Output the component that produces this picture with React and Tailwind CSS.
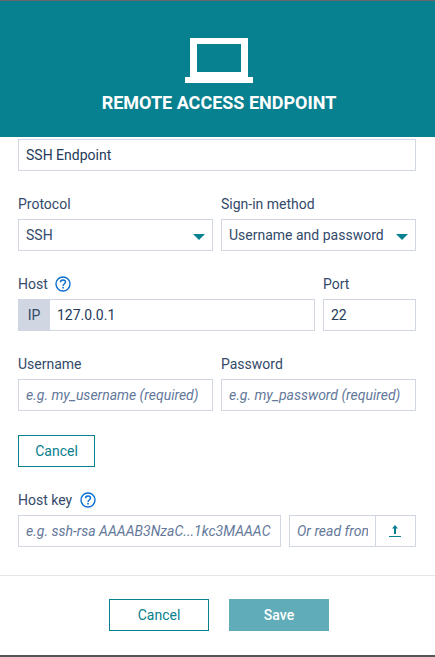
import { useState } from 'react'

const inputCls = "h-[32px] w-full min-w-0 border border-[#d0d7e2] bg-white px-[7px] text-[14px] text-[#253a58] outline-none placeholder:italic placeholder:text-[#64789a]"
const labelCls = "block h-[20px] text-[14px] leading-[20px] text-[#33496a]"

function Laptop() {
  return (
    <svg width="68" height="45" viewBox="0 0 68 45" fill="none">
      <path fill="#fff" fillRule="evenodd" d="M5 0h58v39h5v6H0v-6h5zM12 6v28h44V6z" />
    </svg>
  )
}

function HelpIcon() {
  return (
    <svg width="16" height="16" viewBox="0 0 16 16" fill="none">
      <circle cx="8" cy="8" r="7" stroke="#0a6ed1" strokeWidth="1.4" />
      <path d="M5.500 6.300c0-1.500 1.100-2.300 2.500-2.300s2.500.8 2.500 2.100c0 1.900-2.500 1.800-2.500 3.800" stroke="#0a6ed1" strokeWidth="1.400" />
      <rect x="7.200" y="10.900" width="1.600" height="1.600" fill="#0a6ed1" />
    </svg>
  )
}

function Select({ value }) {
  return (
    <div className="flex h-[32px] items-center justify-between border border-[#d0d7e2] bg-white pl-[7px] pr-[7px] text-[14px] text-[#33496a]">
      <span>{value}</span>
      <span className="mt-[4px] h-0 w-0 border-x-[6px] border-t-[6px] border-x-transparent border-t-[#07808f]" />
    </div>
  )
}

export default function App() {
  const [name, setName] = useState('SSH Endpoint')

  return (
    <div className="flex h-[657px] w-[435px] flex-col overflow-hidden bg-white" style={{ fontFamily: 'Roboto, sans-serif' }}>
      <div className="h-px bg-[#666666]" />
      {/* Cabecera */}
      <header className="flex h-[136px] flex-col items-center bg-[#07808f] pl-[3px] pt-[37px]">
        <Laptop />
        <h1 className="mt-[10px] text-[18px] font-bold leading-[20px] text-white">REMOTE ACCESS ENDPOINT</h1>
      </header>

      <form className="flex flex-1 flex-col pl-[18px] pr-[19px] pt-[2px]">
        <input className={inputCls} value={name} onChange={(e) => setName(e.target.value)} />

        <div className="mt-[23px] grid grid-cols-2 gap-x-2">
          <div>
            <label className={labelCls}>Protocol</label>
            <div className="mt-[5px]"><Select value="SSH" /></div>
          </div>
          <div>
            <label className={labelCls}>Sign-in method</label>
            <div className="mt-[5px]"><Select value="Username and password" /></div>
          </div>
        </div>

        <div className="mt-[23px] flex gap-2">
          <div className="flex-1">
            <label className="flex h-[20px] items-center gap-[7px] text-[14px] text-[#33496a]">Host <HelpIcon /></label>
            <div className="mt-[5px] flex">
              <span className="flex h-[32px] w-[32px] shrink-0 items-center justify-center bg-[#d0d7e2] text-[14px] text-[#33496a]">IP</span>
              <input className={`${inputCls} border-l-0`} defaultValue="127.0.0.1" />
            </div>
          </div>
          <div className="w-[93px]">
            <label className={labelCls}>Port</label>
            <div className="mt-[5px]"><input className={inputCls} defaultValue="22" /></div>
          </div>
        </div>

        <div className="mt-[23px] grid grid-cols-2 gap-x-2">
          <div>
            <label className={labelCls}>Username</label>
            <input className={`${inputCls} mt-[5px]`} placeholder="e.g. my_username (required)" />
          </div>
          <div>
            <label className={labelCls}>Password</label>
            <input className={`${inputCls} mt-[5px]`} placeholder="e.g. my_password (required)" />
          </div>
        </div>

        <button type="button" className="mt-[24px] h-[32px] w-[77px] border border-[#07808f] text-[14px] text-[#07808f]">Cancel</button>

        <label className="mt-[23px] flex h-[20px] items-center gap-[8px] text-[14px] text-[#33496a]">Host key <HelpIcon /></label>
        <div className="mt-[5px] flex gap-2">
          <input className={`${inputCls} flex-1`} placeholder="e.g. ssh-rsa AAAAB3NzaC...1kc3MAAAC" />
          <div className="flex h-[32px] w-[127px] shrink-0 border border-[#d0d7e2]">
            <input className="w-[85px] min-w-0 px-[7px] text-[14px] outline-none placeholder:italic placeholder:text-[#64789a]" placeholder="Or read from file" />
            <span className="flex flex-1 items-center justify-center border-l border-[#d0d7e2] pb-[1px] pr-[1px]">
              <svg width="12" height="12" viewBox="0 0 12 12">
                <path fill="#07808f" d="M6 0l3 3.500H7V9H5V3.500H3zM0 11h12v1H0z" />
              </svg>
            </span>
          </div>
        </div>
      </form>

      {/* Pie con acciones */}
      <footer className="flex h-[80px] items-start justify-center gap-5 border-t border-[#e3e6ea] pl-[3px] pt-[23px]">
        <button type="button" className="h-[32px] w-[100px] border border-[#07808f] text-[14px] text-[#07808f]">Cancel</button>
        <button type="button" className="h-[32px] w-[100px] bg-[#60acb8] text-[14px] font-medium text-white">Save</button>
      </footer>
      <div className="h-[2px] bg-[#555555]" />
    </div>
  )
}
